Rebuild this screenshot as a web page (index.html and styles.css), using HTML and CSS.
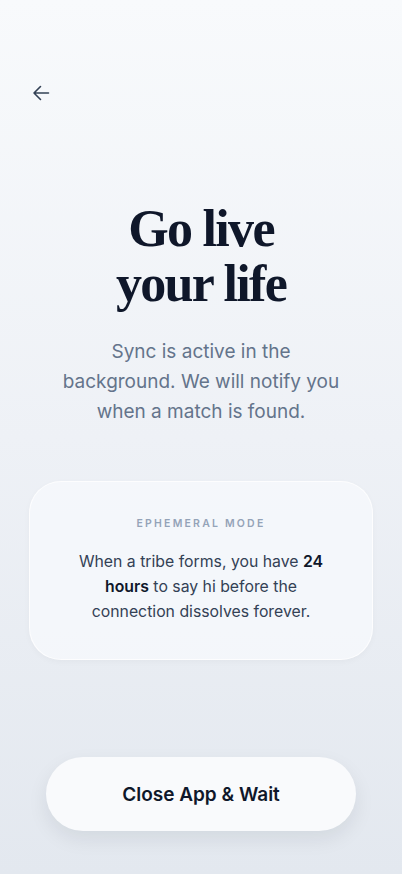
FILE: index.html
```html
<!DOCTYPE html>
<html>
<head>
<meta charset="utf-8">
<link rel="stylesheet" href="styles.css">
</head>
<body>
<div class="screen">
  <header class="top">
    <button class="back" aria-label="Back">
      <svg width="20" height="20" viewBox="0 0 20 20" fill="none" stroke="#334155" stroke-width="1.6" stroke-linecap="round" stroke-linejoin="round"><path d="M17.5 10H3M9.5 3.5L3 10l6.5 6.5"/></svg>
    </button>
  </header>
  <main class="content">
    <h1 class="title">Go live<br>your life</h1>
    <p class="lead">Sync is active in the background. We will notify you when a match is found.</p>
    <section class="card">
      <div class="label">EPHEMERAL MODE</div>
      <p class="card-text">When a tribe forms, you have <strong>24</strong> <strong>hours</strong> to say hi before the connection dissolves forever.</p>
    </section>
  </main>
  <footer class="bottom">
    <button class="cta">Close App &amp; Wait</button>
  </footer>
</div>
</body>
</html>
```
FILE: styles.css
```css
* { box-sizing: border-box; }
html, body { margin: 0; padding: 0; }
body {
  font-family: Inter, "Noto Sans", sans-serif;
  background: linear-gradient(180deg, #f8fafc 0%, #eef1f6 50%, #e3e8ef 100%);
  min-height: 874px;
}
.screen {
  height: 874px;
  display: flex;
  flex-direction: column;
}
.top {
  padding: 83px 0 0 31px;
  height: 104px;
}
.back {
  background: none;
  border: 0;
  padding: 0;
  width: 20px;
  height: 20px;
  display: block;
  cursor: pointer;
}
.content {
  flex: 1;
  display: flex;
  flex-direction: column;
  align-items: center;
  padding: 0 29px;
}
.title {
  margin: 97px 0 0;
  font-family: "Liberation Serif", "DejaVu Serif", serif;
  font-weight: 700;
  font-size: 52px;
  line-height: 55px;
  letter-spacing: -1.7px;
  color: #0f172a;
  text-align: center;
}
.lead {
  margin: 26px 0 0;
  width: 290px;
  font-size: 19px;
  line-height: 30px;
  color: #64748b;
  text-align: center;
}
.card {
  margin-top: 54px;
  width: 100%;
  height: 179px;
  border-radius: 32px;
  background: rgba(246, 248, 251, 0.85);
  border: 1px solid rgba(255,255,255,0.8);
  box-shadow: 0 2px 6px rgba(15, 23, 42, 0.03);
  padding: 34px 38px 0;
  text-align: center;
}
.label {
  font-size: 10.5px;
  font-weight: 600;
  letter-spacing: 2.2px;
  color: #94a3b8;
  line-height: 16px;
}
.card-text {
  margin: 17px 0 0;
  font-size: 15.8px;
  line-height: 25px;
  color: #334155;
}
.card-text strong {
  color: #0f172a;
  font-weight: 600;
}
.bottom {
  padding: 0 46px 43px;
}
.cta {
  width: 100%;
  height: 74px;
  border: 0;
  border-radius: 37px;
  background: #f9fafc;
  box-shadow: 0 8px 20px rgba(15, 23, 42, 0.08);
  font-family: Inter, "Noto Sans", sans-serif;
  font-size: 19px;
  font-weight: 600;
  color: #0f172a;
  cursor: pointer;
}
```
